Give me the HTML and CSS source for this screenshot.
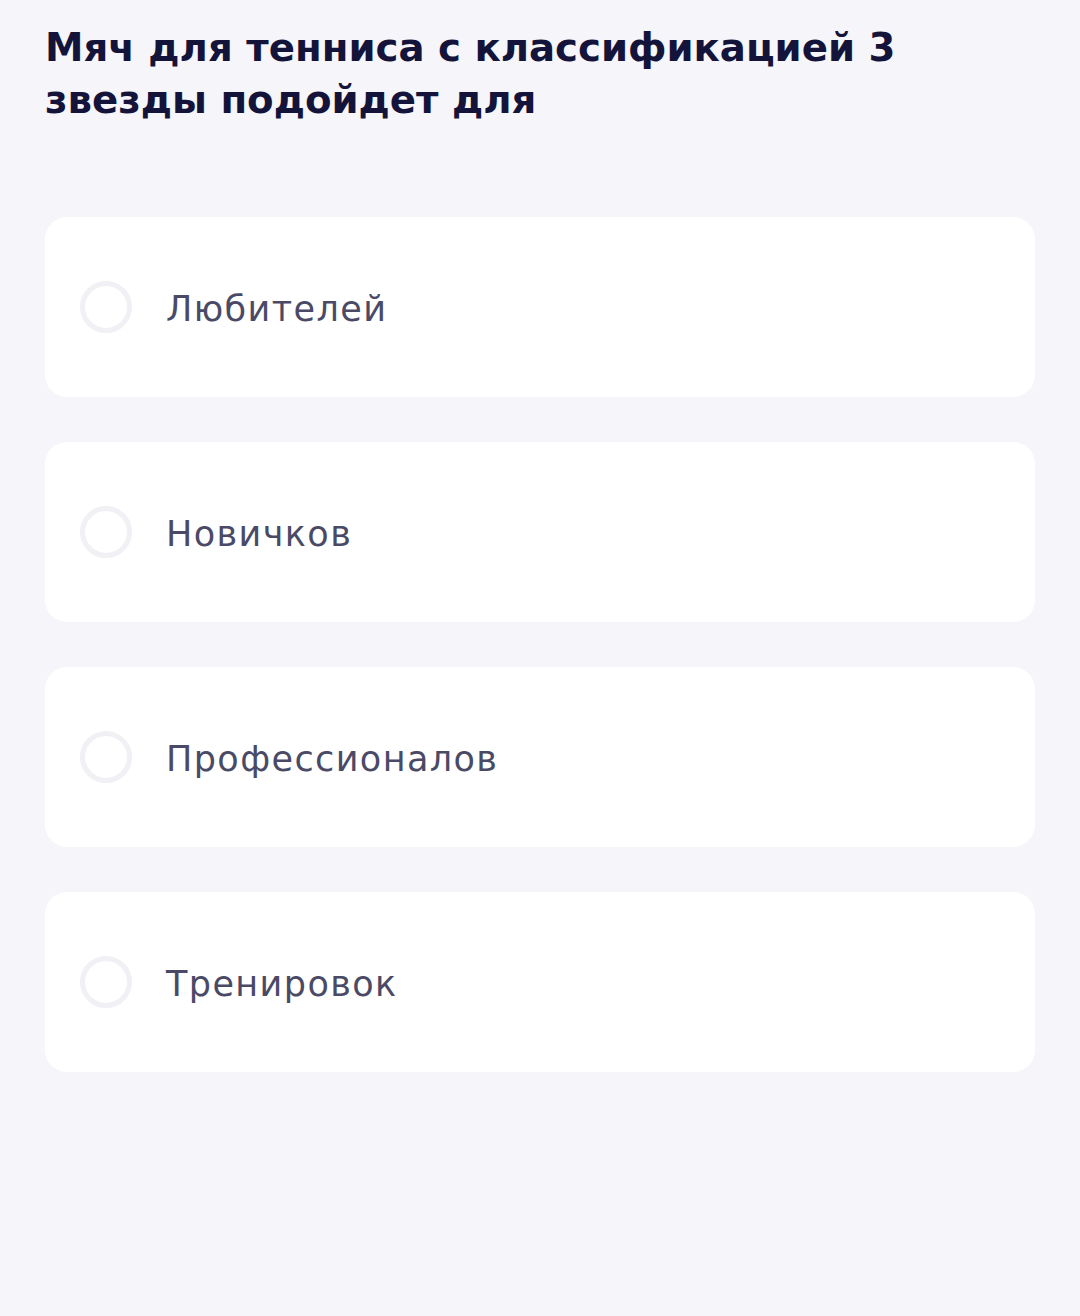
FILE: index.html
```
<!DOCTYPE html>
<html lang="ru">
<head>
<meta charset="utf-8">
<link rel="stylesheet" href="styles.css">
</head>
<body>
<main class="quiz">
  <h1 class="question">Мяч для тенниса с классификацией 3 звезды подойдет для</h1>
  <ul class="options">
    <li class="option"><span class="radio"></span><span class="label">Любителей</span></li>
    <li class="option"><span class="radio"></span><span class="label">Новичков</span></li>
    <li class="option"><span class="radio"></span><span class="label">Профессионалов</span></li>
    <li class="option"><span class="radio"></span><span class="label">Тренировок</span></li>
  </ul>
</main>
</body>
</html>
```
FILE: styles.css
```
html, body {
  margin: 0;
  padding: 0;
  background: #f5f5fa;
}
body {
  width: 1080px;
  height: 1316px;
  font-family: "DejaVu Sans", "Noto Sans", sans-serif;
}
.quiz {
  padding: 22px 45px 0 45px;
}
.question {
  margin: 0;
  font-size: 38.7px;
  line-height: 52px;
  font-weight: 700;
  color: #14143a;
  letter-spacing: 0;
  max-width: 920px;
}
.options {
  list-style: none;
  margin: 91px 0 0 0;
  padding: 0;
  display: flex;
  flex-direction: column;
  gap: 45px;
}
.option {
  height: 180px;
  background: #ffffff;
  border-radius: 22px;
  display: flex;
  align-items: center;
  padding-left: 35px;
  box-sizing: border-box;
}
.radio {
  width: 52px;
  height: 52px;
  border: 5px solid #f0f0f5;
  border-radius: 50%;
  box-sizing: border-box;
  flex: none;
}
.label {
  margin-left: 34px;
  font-size: 35px;
  letter-spacing: 1.4px;
  color: #4a4a66;
  padding-top: 4px;
}
```
